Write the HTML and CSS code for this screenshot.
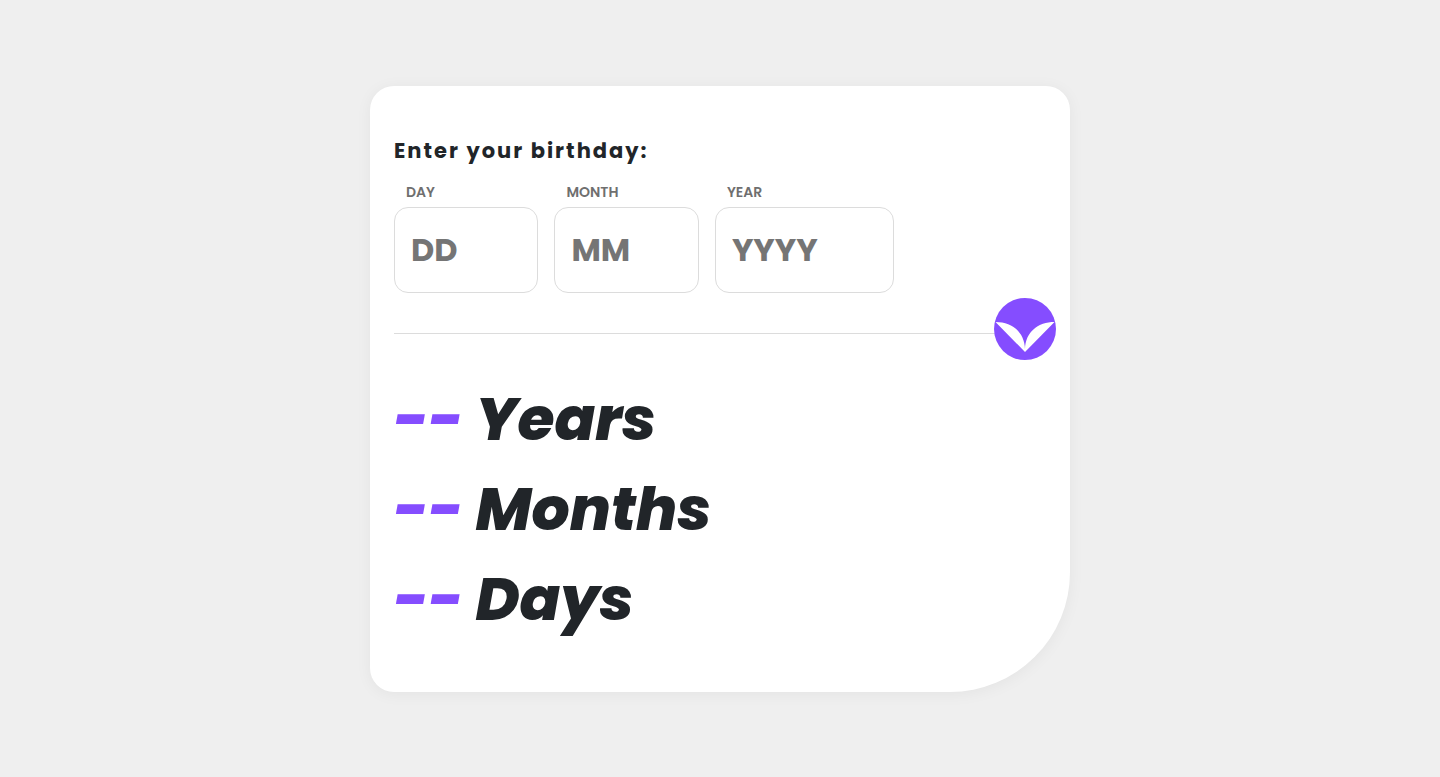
FILE: index.html
```html
<!DOCTYPE html>
<html lang="en">
<head>
  <meta charset="utf-8">
  <meta name="viewport" content="width=device-width, initial-scale=1">
  <title>Age calculator</title>
  <link rel="stylesheet" href="styles.css">
</head>
<body>
  <main class="card">
    <form class="form">
      <h1 class="title">Enter your birthday:</h1>
      <div class="fields">
        <div class="field">
          <label class="label" for="day">DAY</label>
          <input class="input" id="day" type="text" inputmode="numeric" placeholder="DD">
        </div>
        <div class="field">
          <label class="label" for="month">MONTH</label>
          <input class="input" id="month" type="text" inputmode="numeric" placeholder="MM">
        </div>
        <div class="field field-year">
          <label class="label" for="year">YEAR</label>
          <input class="input" id="year" type="text" inputmode="numeric" placeholder="YYYY">
        </div>
      </div>
      <div class="divider">
        <button class="submit" type="button" aria-label="Calculate age">
          <svg class="submit-icon" viewBox="0 0 62 62" aria-hidden="true">
            <path d="M1.500 24C18 24 30.500 34 31 51C31.500 34 44 24 60.500 24L31 54Z" fill="#fff"/>
          </svg>
        </button>
      </div>
    </form>
    <section class="results">
      <p class="result"><span class="value">--</span><span>Years</span></p>
      <p class="result"><span class="value">--</span><span>Months</span></p>
      <p class="result"><span class="value">--</span><span>Days</span></p>
    </section>
  </main>
</body>
</html>
```
FILE: styles.css
```css
* {
  box-sizing: border-box;
}

body {
  margin: 0;
  min-height: 100vh;
  display: flex;
  align-items: center;
  justify-content: center;
  background: #efefef;
  color: #212529;
  font-family: Poppins, Inter, sans-serif;
}

.card {
  width: 100%;
  max-width: 700px;
  padding: 48px 24px;
  background: #fff;
  border-radius: 24px 24px 120px 24px;
  box-shadow: 0 2px 16px rgba(0, 0, 0, 0.05);
}

.title {
  margin: 0 0 15px;
  font-size: 21px;
  line-height: 33px;
  font-weight: 700;
  letter-spacing: 2px;
}

.fields {
  display: flex;
  gap: 16px;
  max-width: 500px;
}

.field {
  flex: 1 1 0;
  min-width: 0;
}

.field-year {
  flex-grow: 1.24;
}

.label {
  display: block;
  margin-bottom: 4px;
  padding-left: 12px;
  color: #6f6f6f;
  font-size: 14px;
  line-height: 21px;
  font-weight: 600;
}

.input {
  display: block;
  width: 100%;
  padding: 18px 16px;
  border: 1px solid #dcdcdc;
  border-radius: 14px;
  background: #fff;
  color: #212529;
  font-family: inherit;
  font-size: 32px;
  line-height: 48px;
  font-weight: 700;
}

.input::placeholder {
  color: #757575;
  opacity: 1;
}

.divider {
  position: relative;
  margin: 40px 0;
  border-top: 1px solid #dcdcdc;
}

.submit {
  position: absolute;
  top: -36px;
  right: -10px;
  width: 62px;
  height: 62px;
  padding: 0;
  border: 0;
  border-radius: 50%;
  background: #854dff;
  cursor: pointer;
}

.submit-icon {
  display: block;
  width: 100%;
}

.result {
  display: flex;
  gap: 12px;
  margin: 0;
  font-size: 60px;
  line-height: 90px;
  font-style: italic;
  font-weight: 800;
}

.value {
  color: #854dff;
}
```
